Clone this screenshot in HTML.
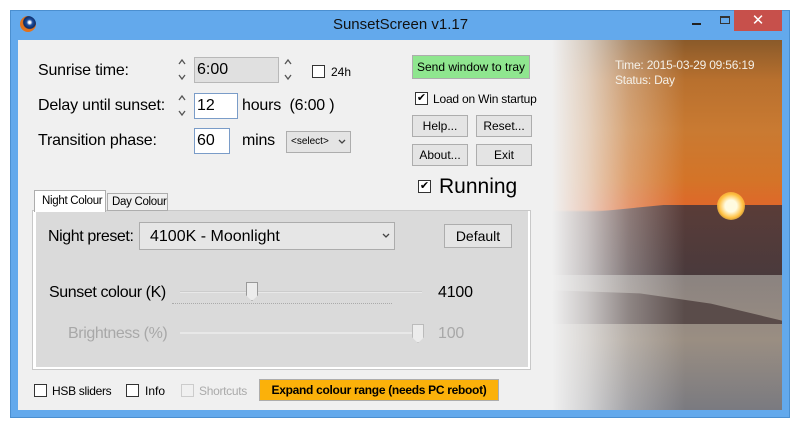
<!DOCTYPE html>
<html><head><meta charset="utf-8"><style>
*{box-sizing:border-box;margin:0;padding:0}
body{width:801px;height:438px;background:#fff;position:relative;overflow:hidden;font-family:"Liberation Sans",sans-serif;color:#000}
.a{position:absolute;white-space:nowrap}
.frame{left:10px;top:10px;width:780px;height:408px;background:#63a9ec;border:1px solid #4b8fd0}
.client{left:18px;top:40px;width:764px;height:370px;background:#f0f0f0}
.lbl{font-size:16px;letter-spacing:-0.2px}
.box{background:#fff;border:1px solid #7a9cc8;font-size:16px;padding:3px 2px}
.btn{background:#e4e4e4;border:1px solid #adadad;font-size:12px;text-align:center}
.cb{width:13px;height:13px;border:1px solid #333;background:#fff}
</style></head><body>
<div class="a frame"></div>
<div class="a" style="left:20px;top:16px;width:16px;height:16px;border-radius:50%;background:radial-gradient(circle at 60% 40%,#fff 0 1px,#1e4fa0 3px,#0b2b66 6px,#e2721c 7px)"></div>
<div class="a" style="left:0;width:801px;top:16px;text-align:center;font-size:15px;color:#111">SunsetScreen v1.17</div>
<div class="a" style="left:692px;top:23px;width:9px;height:2px;background:#222"></div>
<div class="a" style="left:720px;top:16px;width:10px;height:8px;border:1px solid #333;border-top-width:2px"></div>
<div class="a" style="left:734px;top:10px;width:48px;height:21px;background:#c7504b;color:#fff;text-align:center;font-size:15px;line-height:21px">✕</div>
<div class="a client"></div>
<!-- photo -->
<div class="a" style="left:545px;top:40px;width:237px;height:370px;overflow:hidden;background:linear-gradient(#8a5a2a 0,#b8702e 40px,#c97a32 90px,#d47428 140px,#e0662a 170px,#5a3c36 172px,#4a3a3a 230px,#8a8280 232px,#9a8e82 300px,#7a7a80 370px)">
<div class="a" style="left:0;top:165px;width:237px;height:70px;background:linear-gradient(#5a3c38,#4a3a3c);clip-path:polygon(0 30%,20% 10%,50% 0,100% 0,100% 100%,0 100%)"></div>
<div class="a" style="left:0;top:250px;width:237px;height:34px;background:#5a4c4a;clip-path:polygon(0 0,40% 10%,70% 40%,100% 90%,100% 100%,0 100%)"></div>
<div class="a" style="left:172px;top:152px;width:28px;height:28px;border-radius:50%;background:radial-gradient(#fffbe0 30%,#ffc040 60%,rgba(255,150,40,0) 100%)"></div>
<div class="a" style="left:0;top:0;width:140px;height:370px;background:linear-gradient(90deg,#f0f0f0 0,#f0f0f0 5%,rgba(240,240,240,.75) 30%,rgba(240,240,240,.35) 60%,rgba(240,240,240,0) 100%)"></div>
<div class="a" style="left:70px;top:18px;color:#f4f0e8;font-size:12px;line-height:15px;letter-spacing:-0.2px">Time: 2015-03-29 09:56:19<br>Status: Day</div>
</div>
<svg class="a" style="left:176px;top:58px" width="12" height="24"><path d="M3 6l3-4 3 4M3 17l3 4 3-4" fill="none" stroke="#555" stroke-width="1.3"/></svg>
<svg class="a" style="left:282px;top:58px" width="12" height="24"><path d="M3 6l3-4 3 4M3 17l3 4 3-4" fill="none" stroke="#555" stroke-width="1.3"/></svg>
<svg class="a" style="left:176px;top:94px" width="12" height="24"><path d="M3 6l3-4 3 4M3 17l3 4 3-4" fill="none" stroke="#555" stroke-width="1.3"/></svg>
<!-- left controls -->
<div class="a lbl" style="left:38px;top:62px">Sunrise time:</div>
<div class="a box" style="left:194px;top:57px;width:85px;height:26px;background:#e0e0e0;border-color:#b8b8b8">6:00</div>
<div class="a cb" style="left:312px;top:65px"></div>
<div class="a" style="left:331px;top:65px;font-size:12px">24h</div>
<div class="a lbl" style="left:38px;top:97px">Delay until sunset:</div>
<div class="a box" style="left:194px;top:93px;width:44px;height:26px">12</div>
<div class="a lbl" style="left:242px;top:97px">hours&nbsp; (6:00 )</div>
<div class="a lbl" style="left:38px;top:132px">Transition phase:</div>
<div class="a box" style="left:194px;top:128px;width:36px;height:26px">60</div>
<div class="a lbl" style="left:242px;top:132px">mins</div>
<div class="a btn" style="left:286px;top:131px;width:65px;height:22px;font-size:10px;line-height:20px;text-align:left;padding-left:4px">&lt;select&gt;</div>
<svg class="a" style="left:338px;top:138px" width="8" height="8"><path d="M1 2l3 3 3-3" fill="none" stroke="#444" stroke-width="1.3"/></svg>
<!-- right buttons -->
<div class="a btn" style="left:412px;top:55px;width:118px;height:24px;background:#8fe68f;line-height:22px">Send window to tray</div>
<div class="a cb" style="left:415px;top:92px;font-size:11px;line-height:11px;text-align:center">✔</div>
<div class="a" style="left:433px;top:92px;font-size:12px;letter-spacing:-0.2px">Load on Win startup</div>
<div class="a btn" style="left:412px;top:115px;width:56px;height:22px;line-height:20px">Help...</div>
<div class="a btn" style="left:476px;top:115px;width:56px;height:22px;line-height:20px">Reset...</div>
<div class="a btn" style="left:412px;top:144px;width:56px;height:22px;line-height:20px">About...</div>
<div class="a btn" style="left:476px;top:144px;width:56px;height:22px;line-height:20px">Exit</div>
<div class="a cb" style="left:418px;top:180px;font-size:11px;line-height:11px;text-align:center">✔</div>
<div class="a" style="left:439px;top:175px;font-size:21px">Running</div>
<!-- tabs -->
<div class="a" style="left:32px;top:210px;width:499px;height:160px;background:#fff;border:1px solid #c8c8c8"></div>
<div class="a" style="left:36px;top:211px;width:492px;height:156px;background:#dadada"></div>
<div class="a" style="left:34px;top:190px;width:72px;height:22px;background:#fff;border:1px solid #adadad;border-bottom:none;font-size:11.5px;padding:4px 0 0 7px;letter-spacing:-0.3px">Night Colour</div>
<div class="a" style="left:107px;top:193px;width:61px;height:18px;background:#f0f0f0;border:1px solid #adadad;font-size:11.5px;padding:2px 0 0 4px;letter-spacing:-0.3px">Day Colour</div>
<div class="a lbl" style="left:48px;top:228px;letter-spacing:-0.4px">Night preset:</div>
<div class="a" style="left:139px;top:222px;width:256px;height:28px;background:#e6e6e6;border:1px solid #acacac;font-size:16px;padding:5px 10px">4100K - Moonlight</div>
<svg class="a" style="left:382px;top:232px" width="8" height="8"><path d="M1 2l3 3 3-3" fill="none" stroke="#444" stroke-width="1.3"/></svg>
<div class="a btn" style="left:444px;top:224px;width:68px;height:24px;font-size:14px;line-height:22px">Default</div>
<div class="a lbl" style="left:49px;top:284px;letter-spacing:-0.4px">Sunset colour (K)</div>
<div class="a" style="left:180px;top:291px;width:242px;height:2px;background:#e8e8e8;border-top:1px solid #ccc"></div>
<div class="a" style="left:172px;top:303px;width:220px;height:4px;border-top:1px dotted #aaa"></div>
<div class="a" style="left:246px;top:282px;width:12px;height:19px;background:#ececec;border:1px solid #999;clip-path:polygon(0 0,100% 0,100% 70%,50% 100%,0 70%)"></div>
<div class="a lbl" style="left:438px;top:284px">4100</div>
<div class="a lbl" style="left:68px;top:325px;color:#a8a8a8;letter-spacing:-0.4px">Brightness (%)</div>
<div class="a" style="left:180px;top:332px;width:242px;height:2px;background:#e8e8e8"></div>
<div class="a" style="left:412px;top:324px;width:12px;height:19px;background:#ececec;border:1px solid #bbb;clip-path:polygon(0 0,100% 0,100% 70%,50% 100%,0 70%)"></div>
<div class="a lbl" style="left:438px;top:325px;color:#a8a8a8">100</div>
<!-- bottom -->
<div class="a cb" style="left:34px;top:384px"></div>
<div class="a" style="left:52px;top:384px;font-size:12px;letter-spacing:-0.3px">HSB sliders</div>
<div class="a cb" style="left:126px;top:384px"></div>
<div class="a" style="left:145px;top:384px;font-size:12px">Info</div>
<div class="a cb" style="left:181px;top:384px;border-color:#ccc;background:#f0f0f0"></div>
<div class="a" style="left:199px;top:384px;font-size:12px;color:#aaa;letter-spacing:-0.3px">Shortcuts</div>
<div class="a" style="left:259px;top:379px;width:240px;height:22px;background:#fbb10a;border:1px solid #adadad;font-size:12px;font-weight:bold;text-align:center;line-height:20px;letter-spacing:-0.3px">Expand colour range (needs PC reboot)</div>
</body></html>
